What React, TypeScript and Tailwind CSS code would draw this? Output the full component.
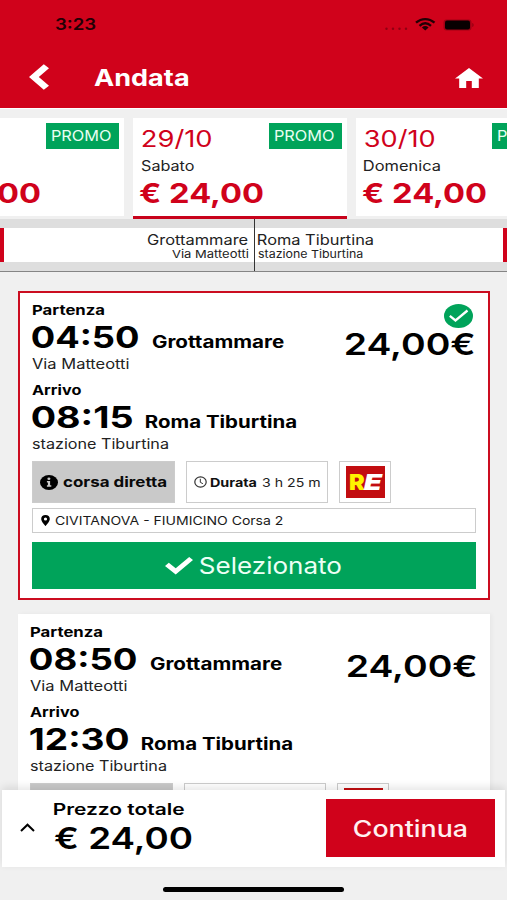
import { useLayoutEffect, useRef } from "react";
import type { ReactNode } from "react";
import clsx from "clsx";

/** Single line of text, stretched so that its ink fills the width given by its classes. */
function Fit({ children, className }: { children: string; className: string }) {
  const box = useRef<HTMLDivElement>(null);
  const inner = useRef<HTMLSpanElement>(null);

  useLayoutEffect(() => {
    const ctx = document.createElement("canvas").getContext("2d");
    if (!ctx || !box.current || !inner.current) return;
    const style = getComputedStyle(inner.current);
    ctx.font = `${style.fontWeight} ${style.fontSize} ${style.fontFamily}`;
    const m = ctx.measureText(children);
    const scale =
      box.current.clientWidth / (m.actualBoundingBoxLeft + m.actualBoundingBoxRight);
    inner.current.style.transform = `translateX(${m.actualBoundingBoxLeft * scale}px) scaleX(${scale})`;
  }, [children]);

  return (
    <div ref={box} className={clsx("shrink-0 whitespace-nowrap", className)}>
      <span ref={inner} className="block w-max origin-left">
        {children}
      </span>
    </div>
  );
}

function Header() {
  return (
    <header className="h-[108px] shrink-0 bg-[#d0021b]">
      <div className="flex h-[49px] items-center pl-[55px] pr-[33px]">
        <Fit className="w-[41px] text-[16px] leading-[49px] font-semibold text-[#220005]">3:23</Fit>
        <svg className="ml-auto h-[16px] w-[90px]" viewBox="0 0 90 16">
          <g fill="#8f0012">
            <circle cx="2.5" cy="11.8" r="1.2" />
            <circle cx="9" cy="11.8" r="1.2" />
            <circle cx="15.500" cy="11.8" r="1.2" />
            <circle cx="22" cy="11.8" r="1.2" />
          </g>
          <g fill="none" stroke="#220005" strokeWidth="2.300">
            <path d="M32 5.700C37.500 0.800 45 0.800 50.500 5.700" />
            <path d="M35.500 8.800C39.200 5.600 43.300 5.600 47 8.800" />
          </g>
          <path d="M37.900 10.400C40 8.600 42.500 8.600 44.600 10.400L41.250 13.600Z" fill="#220005" />
          <rect x="59.500" y="2.500" width="28" height="11" rx="3" fill="#a00015" />
          <rect x="61" y="3.500" width="25" height="9" rx="2" fill="#080001" />
          <path d="M88.300 6C90 6.500 90 9.500 88.300 10Z" fill="#8f0012" />
        </svg>
      </div>
      <div className="flex h-[57px] items-center pl-[29px] pr-[24px]">
        <svg className="h-[27px] w-[20px]" viewBox="0 0 20 27">
          <path d="M0 13L14.800 0.300L20 4.200L9.800 13L20 21.800L14.800 25.700Z" fill="#fff" />
        </svg>
        <Fit className="ml-[45px] w-[94px] text-[23px] leading-[58px] font-bold text-white">Andata</Fit>
        <svg className="ml-auto h-[20px] w-[28px]" viewBox="2 3 20 17" preserveAspectRatio="none">
          <path d="M10 20v-6h4v6h5v-8h3L12 3 2 12h3v8z" fill="#fff" />
        </svg>
      </div>
    </header>
  );
}

function DayCard({ date, day, dayWidth, active }: { date: string; day: string; dayWidth: string; active?: boolean }) {
  return (
    <div
      className={clsx(
        "h-[101px] w-[214px] shrink-0 border-b-[3px] bg-white pl-[9px] pr-[5px] pt-[5px] text-[#d0021b]",
        active ? "border-[#c8021b]" : "border-[#f0f0f0]",
      )}
    >
      <div className="flex h-[32px] items-start justify-between">
        <Fit className="w-[70px] text-[23px] leading-[33px]">{date}</Fit>
        <div className="h-[26px] w-[73px] bg-[#00a35a] pl-[6px] text-[#e9fff3]">
          <Fit className="w-[59px] text-[15px] leading-[26px]">PROMO</Fit>
        </div>
      </div>
      <Fit className={clsx("-ml-px text-[14px] leading-[22px] text-[#222]", dayWidth)}>{day}</Fit>
      <Fit className="-ml-[3px] w-[124px] text-[26.5px] leading-[33px] font-bold">€ 24,00</Fit>
    </div>
  );
}

function Days() {
  return (
    <div className="h-[111px] shrink-0 overflow-hidden border-t border-white bg-[#f0f0f0] pt-[9px]">
      <div className="-ml-[90px] flex gap-[9px]">
        <DayCard date="28/10" day="Venerdì" dayWidth="w-[60px]" />
        <DayCard date="29/10" day="Sabato" dayWidth="w-[53px]" active />
        <DayCard date="30/10" day="Domenica" dayWidth="w-[76px]" />
      </div>
    </div>
  );
}

function RouteStrip() {
  return (
    <div className="flex h-[53px] shrink-0 border-b border-[#858585] bg-[#dedede] text-[#222]">
      <div className="flex w-[254px] items-center">
        <div className="flex h-[34px] w-full flex-col items-end border-l-[4px] border-[#d0021b] bg-white pr-[6px] pt-[2px]">
          <Fit className="w-[101px] text-[14px] leading-[19px]">Grottammare</Fit>
          <Fit className="w-[76px] text-[11px] leading-[10px]">Via Matteotti</Fit>
        </div>
      </div>
      <div className="w-px bg-[#333]" />
      <div className="flex flex-1 items-center">
        <div className="h-[34px] w-full border-r-[4px] border-[#d0021b] bg-white pl-[3px] pt-[2px]">
          <Fit className="w-[115px] text-[14px] leading-[19px]">Roma Tiburtina</Fit>
          <Fit className="w-[105px] text-[11px] leading-[10px]">stazione Tiburtina</Fit>
        </div>
      </div>
    </div>
  );
}

function Box({ className, children }: { className: string; children: ReactNode }) {
  return <div className={clsx("flex items-center border border-[#ccc]", className)}>{children}</div>;
}

interface TripProps {
  start: string;
  startWidth: string;
  end: string;
  endWidth: string;
  selected?: boolean;
}

function TripCard({ start, startWidth, end, endWidth, selected }: TripProps) {
  return (
    <div
      className={clsx(
        "relative bg-white px-[12px]",
        selected
          ? "border-2 border-[#cb0d20] pt-[7px] pb-[9px]"
          : "pt-[7.5px] pb-[9px] shadow-[2px_0_4px_rgba(0,0,0,0.04)]",
      )}
    >
      <div className="flex justify-between">
        <div className="text-black">
          <Fit className="w-[72px] text-[13.5px] leading-[20px] font-bold">Partenza</Fit>
          <div className="flex h-[35px]">
            <Fit className={clsx("text-[30px] leading-[35px] font-bold", startWidth)}>{start}</Fit>
            <Fit className="ml-[14px] w-[132px] text-[17px] leading-[45px] font-bold">Grottammare</Fit>
          </div>
          <Fit className="w-[97px] text-[14px] leading-[18px] text-[#222]">Via Matteotti</Fit>
          <Fit className="mt-[7px] w-[49px] text-[13.5px] leading-[20px] font-bold">Arrivo</Fit>
          <div className="flex h-[34px]">
            <Fit className={clsx("text-[30px] leading-[34px] font-bold", endWidth)}>{end}</Fit>
            <Fit className="ml-[14px] w-[150px] text-[17px] leading-[44px] font-bold">Roma Tiburtina</Fit>
          </div>
          <Fit className="w-[136px] text-[14px] leading-[19px] text-[#222]">stazione Tiburtina</Fit>
        </div>
        <div className="flex flex-col items-end pr-[2px] pt-[4px]">
          <div className="h-[24px] pr-px">
            {selected && (
              <svg className="h-[24px] w-[29px]" viewBox="0 0 29 24">
                <ellipse cx="14.500" cy="12" rx="14.500" ry="12" fill="#00a35a" />
                <path d="M5.800 11.800L11.500 16.500L23.500 6.500" fill="none" stroke="#fff" strokeWidth="2.300" />
              </svg>
            )}
          </div>
          <Fit className="w-[129px] text-[30px] leading-[33px] font-semibold text-black">24,00€</Fit>
        </div>
      </div>

      <div className="mt-[8px] flex h-[42px]">
        <Box className="w-[143px] bg-[#c9c9c9] pl-[7px]">
          <svg className="h-[15px] w-[18px]" viewBox="0 0 18 15">
            <ellipse cx="9" cy="7.500" rx="9" ry="7.500" fill="#000" />
            <ellipse cx="8.900" cy="3.700" rx="1.500" ry="1.200" fill="#c9c9c9" />
            <path d="M6.900 6.100H10.100V10.300H11.300V11.700H6.900V10.300H7.900V7.500H6.900Z" fill="#c9c9c9" />
          </svg>
          <Fit className="ml-[5px] w-[104px] text-[14px] leading-[42px] font-bold text-[#0a0a0a]">corsa diretta</Fit>
        </Box>
        <Box className="ml-[11px] w-[142px] pl-[7px]">
          <svg className="h-[12px] w-[13px] shrink-0" viewBox="0 0 13 12">
            <ellipse cx="6.500" cy="6" rx="5.700" ry="5.100" fill="none" stroke="#333" strokeWidth="1.200" />
            <path d="M6.300 2.800V6.300L8.900 7.700" fill="none" stroke="#333" strokeWidth="1" />
          </svg>
          <Fit className="ml-[3px] w-[47px] text-[12px] leading-[43px] font-bold text-[#111]">Durata</Fit>
          <Fit className="ml-[5px] w-[58px] text-[12px] leading-[43px] text-[#222]">3 h 25 m</Fit>
        </Box>
        <Box className="ml-[11px] w-[52px] justify-center">
          <div className="flex h-[32px] w-[39px] items-center justify-center bg-[#c20d10]">
            <Fit className="w-[15px] text-[22px] leading-[32px] font-black text-[#fff200]">R</Fit>
            <Fit className="w-[16px] text-[22px] leading-[32px] font-black text-white italic">E</Fit>
          </div>
        </Box>
      </div>

      <Box className="mt-[5px] h-[25px] pl-[8px]">
        <svg className="h-[11px] w-[9px]" viewBox="0 0 9 11">
          <path
            fillRule="evenodd"
            d="M4.500 0C1.800 0 0.200 1.700 0.200 3.900C0.200 6.500 4.500 11 4.500 11S8.800 6.500 8.800 3.900C8.800 1.700 7.200 0 4.500 0ZM4.500 2.400A1.600 1.500 0 1 1 4.500 5.400A1.600 1.500 0 1 1 4.500 2.400Z"
            fill="#000"
          />
        </svg>
        <Fit className="ml-[5px] w-[228px] text-[12px] leading-[24px] text-[#1a1a1a]">
          CIVITANOVA - FIUMICINO Corsa 2
        </Fit>
      </Box>

      <div className="mt-[9px] flex h-[47px] items-center bg-[#00a35a] pl-[133px]">
        <svg className="h-[18px] w-[28px]" viewBox="0 0 28 18">
          <path d="M0 9L3.800 5.800L10.700 11.200L24.200 0L28 3L10.700 17.500Z" fill="#fff" />
        </svg>
        <Fit className="ml-[7px] w-[141px] text-[23px] leading-[48px] text-[#ecfff5]">Selezionato</Fit>
      </div>
    </div>
  );
}

function TotalBar() {
  return (
    <div className="relative mx-[2px] flex h-[77px] shrink-0 items-center bg-white pl-[18px] pr-[10px] pb-[2px] shadow-[0_-3px_8px_rgba(0,0,0,0.1)]">
      <svg className="h-[9px] w-[15px]" viewBox="0 0 15 9">
        <path d="M1 8L7.500 1.700L14 8" fill="none" stroke="#000" strokeWidth="2" />
      </svg>
      <div className="ml-[19px] text-black">
        <Fit className="w-[130px] text-[16px] leading-[21px] font-semibold">Prezzo totale</Fit>
        <Fit className="w-[138px] text-[30px] leading-[37px] font-semibold">€ 24,00</Fit>
      </div>
      <div className="ml-auto flex h-[58px] w-[169px] justify-center bg-[#d0021b]">
        <Fit className="w-[113px] text-[22.5px] leading-[59px] font-medium text-[#fff0f0]">Continua</Fit>
      </div>
    </div>
  );
}

export default function App() {
  return (
    <div className="flex h-[900px] w-[507px] flex-col overflow-hidden bg-[#f0f0f0] font-[Inter,'Liberation_Sans',sans-serif]">
      <Header />
      <Days />
      <RouteStrip />
      <main className="flex min-h-0 flex-1 flex-col gap-[14px] overflow-hidden pl-[18px] pr-[17px] pt-[19px]">
        <TripCard start="04:50" startWidth="w-[106px]" end="08:15" endWidth="w-[100px]" selected />
        <TripCard start="08:50" startWidth="w-[106px]" end="12:30" endWidth="w-[98px]" />
      </main>
      <TotalBar />
      <div className="flex h-[33px] shrink-0 justify-center pt-[20px]">
        <div className="h-[5px] w-[181px] rounded-full bg-black" />
      </div>
    </div>
  );
}
